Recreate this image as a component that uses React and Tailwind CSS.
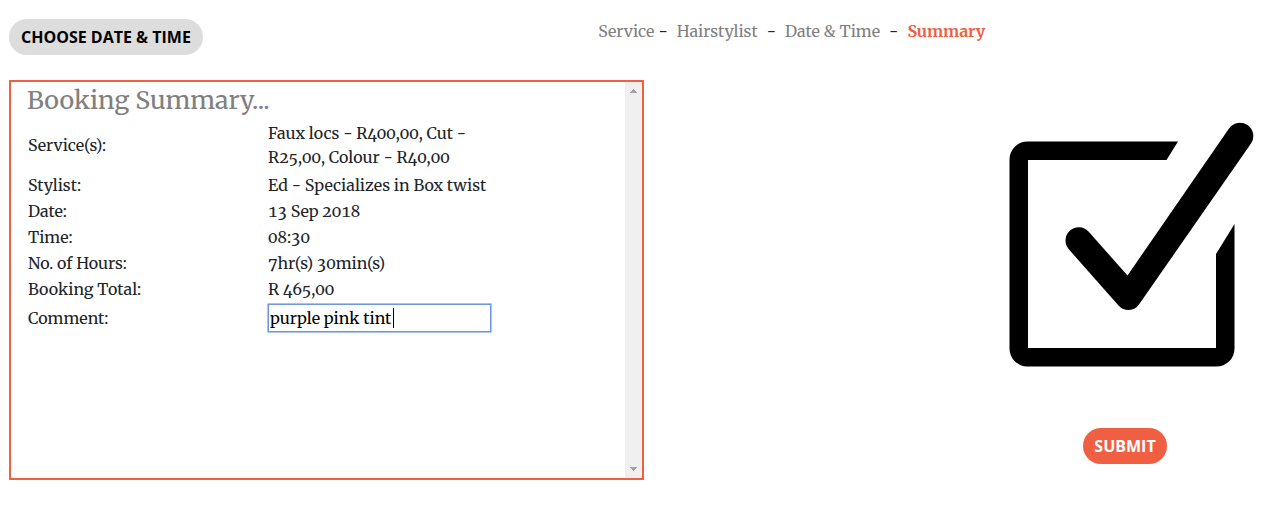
import { useEffect, useRef, useState } from "react";

const serif = "font-['Merriweather','DejaVu_Serif_Condensed','DejaVu_Serif',serif]";

const details = [
  { label: "Stylist:", value: "Ed - Specializes in Box twist" },
  { label: "Date:", value: "13 Sep 2018" },
  { label: "Time:", value: "08:30" },
  { label: "No. of Hours:", value: "7hr(s) 30min(s)" },
  { label: "Booking Total:", value: "R 465,00" },
];

function Steps() {
  return (
    <nav aria-label="Booking steps" className="flex items-center gap-[9px] text-[16px] leading-6 text-[#212529]">
      <span className="flex gap-1">
        <a href="#service" className="text-[#808080]">Service</a>
        <span>-</span>
      </span>
      <a href="#hairstylist" className="text-[#808080]">Hairstylist</a>
      <span>-</span>
      <a href="#date" className="text-[#808080]">Date &amp; Time</a>
      <span>-</span>
      <a href="#summary" aria-current="step" className="font-bold text-[#f15f43]">Summary</a>
    </nav>
  );
}

function ScrollTrack() {
  return (
    <div aria-hidden="true" className="flex w-[17px] shrink-0 flex-col items-center justify-between bg-[#f0f0f0] py-[7px]">
      <svg width="7" height="4" viewBox="0 0 7 4" fill="#a3a3a3" shapeRendering="crispEdges">
        <path d="M3 0h1v1h1v1h1v1h1v1H0V3h1V2h1V1h1z" />
      </svg>
      <svg width="7" height="4" viewBox="0 0 7 4" fill="#a3a3a3" shapeRendering="crispEdges">
        <path d="M0 0h7v1H6v1H5v1H4v1H3V3H2V2H1V1H0z" />
      </svg>
    </div>
  );
}

function CommentField() {
  const field = useRef(null);
  const [untouched, setUntouched] = useState(true);

  useEffect(() => {
    field.current.focus();
    field.current.setSelectionRange(field.current.value.length, field.current.value.length);
  }, []);

  // A steady caret marks the end of the text until the visitor starts to edit.
  const edit = () => setUntouched(false);

  return (
    <div className="relative">
      <input
        id="comment"
        ref={field}
        type="text"
        defaultValue="purple pink tint"
        onKeyDown={edit}
        onPointerDown={edit}
        onBlur={edit}
        className={`block h-[30px] w-full rounded-[1px] border border-[#a9c4f2] bg-white px-[2px] text-black outline-none ring-1 ring-[#6f97e0] ring-inset ${untouched ? "caret-transparent" : "caret-black"}`}
      />
      {untouched && <span aria-hidden="true" className="absolute top-[5px] left-[126px] h-5 w-px bg-black" />}
    </div>
  );
}

function CheckMark() {
  return (
    <svg aria-hidden="true" className="h-[246px] w-[260px]" viewBox="995 122 260 246" fill="none">
      <path
        d="M1178 141.500H1027.500A18 18 0 0 0 1009.500 159.500V348.500A18 18 0 0 0 1027.500 366.500H1216.500A18 18 0 0 0 1234.500 348.500V224L1216 254V348H1028V160H1166.500Z"
        fill="#000"
      />
      <path
        d="M1229 128.500A13.300 13.300 0 0 1 1251 143.500L1139 304.500A13 13 0 0 1 1118.500 305.500L1069 249.500A13 13 0 0 1 1088.500 231.500L1127.500 275.500Z"
        fill="#000"
      />
    </svg>
  );
}

export default function App() {
  return (
    <div className={`bg-white pr-[7px] pb-7 pl-[9px] text-[#212529] ${serif}`}>
      <header className="flex h-20 items-start pt-[19px]">
        <div className="w-[46.4%] shrink-0">
          <button type="button" className="h-9 rounded-full bg-[#dddddd] px-3 font-['Open_Sans',sans-serif] text-[16px] font-bold whitespace-nowrap text-black">
            CHOOSE DATE &amp; TIME
          </button>
        </div>
        <Steps />
      </header>

      <main className="grid grid-cols-2">
        <section className="flex h-[400px] border-2 border-[#f15f43]">
          <div className="min-w-0 flex-1 pl-4">
            <h1 className="h-9 text-[25px] leading-9 text-[#808080]">Booking Summary...</h1>
            <table className="w-[465px] max-w-full table-fixed border-collapse text-left text-[16px] leading-6 [font-feature-settings:'onum','tnum']">
              <colgroup>
                <col className="w-[240px]" />
                <col />
              </colgroup>
              <tbody>
                <tr className="h-[54px]">
                  <th scope="row" className="p-px font-normal">Service(s):</th>
                  <td className="p-px">Faux locs - R400,00, Cut - R25,00, Colour - R40,00</td>
                </tr>
                {details.map(({ label, value }) => (
                  <tr key={label}>
                    <th scope="row" className="p-px font-normal">{label}</th>
                    <td className="p-px whitespace-nowrap">{value}</td>
                  </tr>
                ))}
                <tr>
                  <th scope="row" className="p-px font-normal">
                    <label htmlFor="comment">Comment:</label>
                  </th>
                  <td className="py-px">
                    <CommentField />
                  </td>
                </tr>
              </tbody>
            </table>
          </div>
          <ScrollTrack />
        </section>

        <section className="flex flex-col items-end pt-[42px] pr-6">
          <div className="flex flex-col items-center gap-[60px]">
            <CheckMark />
            <button type="submit" className="h-9 rounded-full bg-[#f15f43] px-[11px] font-['Open_Sans',sans-serif] text-[16px] font-bold text-white">
              SUBMIT
            </button>
          </div>
        </section>
      </main>
    </div>
  );
}
